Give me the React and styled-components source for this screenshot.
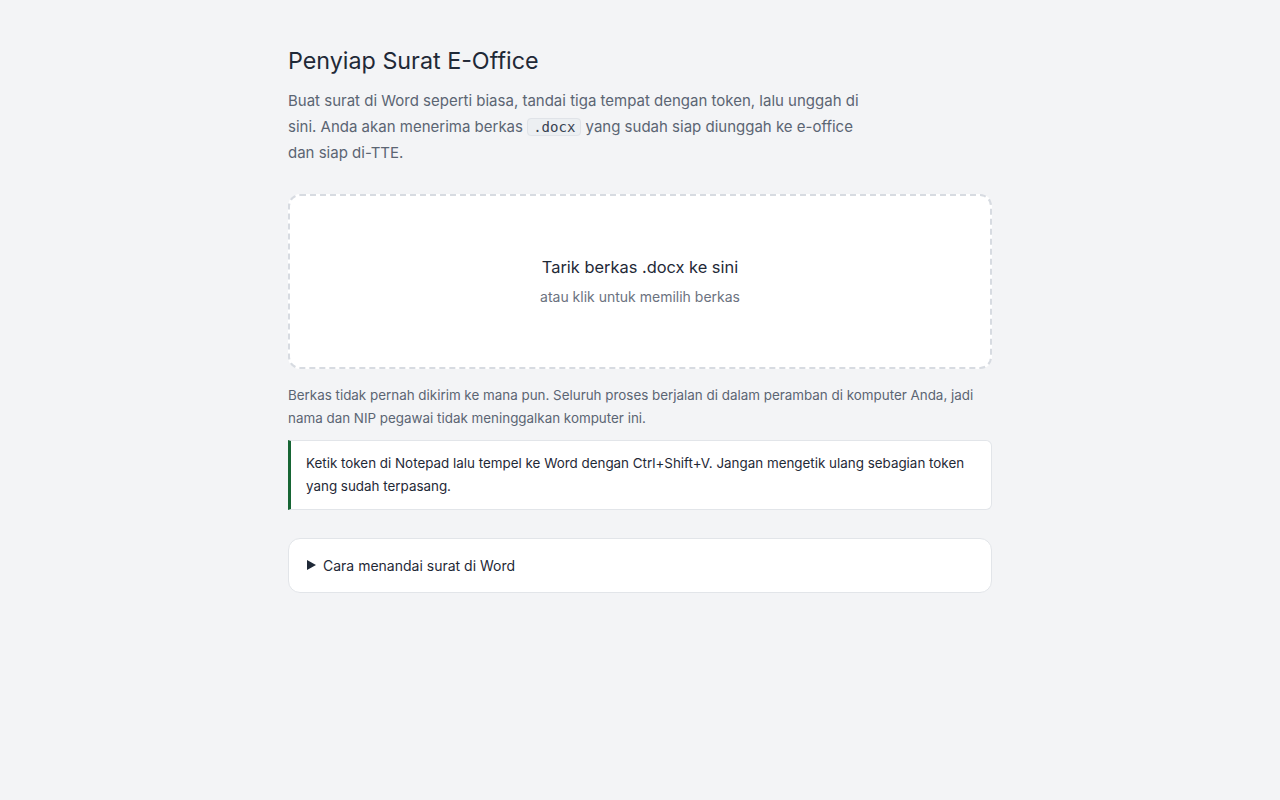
import React from "react";
import styled, { createGlobalStyle } from "styled-components";

const GlobalStyle = createGlobalStyle`
  html, body {
    margin: 0;
    padding: 0;
    background: #f3f4f6;
  }
  body {
    font-family: Inter, "Liberation Sans", sans-serif;
    color: #1f2937;
  }
  * {
    box-sizing: border-box;
  }
`;

const Page = styled.main`
  max-width: 704px;
  margin: 0 auto;
  padding: 45px 0 40px;
`;

const Title = styled.h1`
  margin: 0 0 11px;
  font-size: 23.3px;
  font-weight: 400;
  line-height: 32px;
  color: #1f2937;
`;

const Lead = styled.p`
  margin: 0 0 28px;
  max-width: 576px;
  font-size: 15px;
  line-height: 25.5px;
  color: #5b6573;
`;

const Code = styled.code`
  font-family: "DejaVu Sans Mono", monospace;
  font-size: 14px;
  padding: 0 5px;
  background: #eceff2;
  border: 1px solid #e0e3e8;
  border-radius: 4px;
  color: #374151;
`;

const DropZone = styled.div`
  display: flex;
  flex-direction: column;
  align-items: center;
  gap: 9px;
  padding: 60px 24px;
  background: #fff;
  border: 2px dashed #d7dbe1;
  border-radius: 12px;
  cursor: pointer;
`;

const DropTitle = styled.div`
  font-size: 16.4px;
  line-height: 22px;
  color: #1f2937;
`;

const DropHint = styled.div`
  font-size: 14px;
  line-height: 20px;
  color: #6b7280;
`;

const Note = styled.p`
  margin: 15px 0 10px;
  font-size: 13.4px;
  line-height: 23px;
  color: #5b6573;
`;

const Tip = styled.div`
  padding: 11px 16px 11px 15px;
  background: #fff;
  border: 1px solid #e2e5e9;
  border-left: 3px solid #166534;
  border-radius: 0 6px 6px 0;
  font-size: 13.4px;
  line-height: 23px;
  color: #1f2937;
`;

const Details = styled.details`
  margin-top: 28px;
  background: #fff;
  border: 1px solid #e2e5e9;
  border-radius: 12px;
`;

const Summary = styled.summary`
  display: flex;
  align-items: center;
  gap: 7px;
  padding: 16px 18px;
  font-size: 14px;
  line-height: 21px;
  color: #1f2937;
  list-style: none;
  cursor: pointer;

  &::-webkit-details-marker {
    display: none;
  }

  &::before {
    content: "";
    width: 0;
    height: 0;
    border-left: 9px solid #1f2937;
    border-top: 5px solid transparent;
    border-bottom: 5px solid transparent;
  }
`;

export default function App() {
  return (
    <>
      <GlobalStyle />
      <Page>
        <Title>Penyiap Surat E-Office</Title>
        <Lead>
          Buat surat di Word seperti biasa, tandai tiga tempat dengan token, lalu unggah di
          sini. Anda akan menerima berkas <Code>.docx</Code> yang sudah siap diunggah ke
          e-office dan siap di-TTE.
        </Lead>
        <DropZone>
          <DropTitle>Tarik berkas .docx ke sini</DropTitle>
          <DropHint>atau klik untuk memilih berkas</DropHint>
        </DropZone>
        <Note>
          Berkas tidak pernah dikirim ke mana pun. Seluruh proses berjalan di dalam peramban di
          komputer Anda, jadi nama dan NIP pegawai tidak meninggalkan komputer ini.
        </Note>
        <Tip>
          Ketik token di Notepad lalu tempel ke Word dengan Ctrl+Shift+V. Jangan mengetik ulang
          sebagian token yang sudah terpasang.
        </Tip>
        <Details>
          <Summary>Cara menandai surat di Word</Summary>
        </Details>
      </Page>
    </>
  );
}
